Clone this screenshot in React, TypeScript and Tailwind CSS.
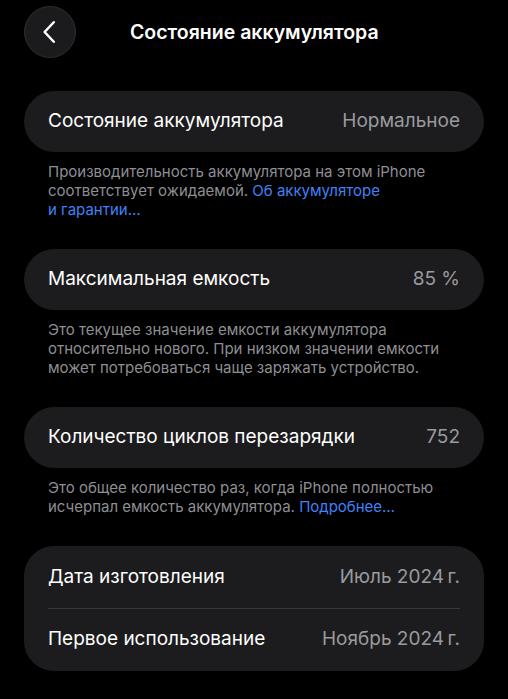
import React from "react";

const font = { fontFamily: "Inter, 'Noto Sans', sans-serif" };

function Row({ label, value }: { label: string; value: string }) {
  return (
    <div className="flex h-[61px] items-center justify-between px-6">
      <span className="text-[19px] text-white">{label}</span>
      <span className="text-[19px] text-[#9a9a9f]">{value}</span>
    </div>
  );
}

export default function App() {
  return (
    <div className="min-h-[699px] w-[508px] bg-black pb-6" style={font}>
      <div className="relative flex h-[63px] items-center">
        <button className="ml-6 flex h-[52px] w-[52px] items-center justify-center rounded-full border border-[#2e2e30] bg-[#1b1b1d]">
          <svg width="26" height="26" viewBox="0 0 24 24" fill="none">
            <path d="M15.5 3 L7 12 L15.5 21" stroke="white" strokeWidth="2.3" strokeLinecap="round" strokeLinejoin="round" />
          </svg>
        </button>
        <div className="ml-[54px] pt-[2px] text-[19.5px] font-semibold text-white">
          Состояние аккумулятора
        </div>
      </div>

      <div className="px-6 pt-[28px]">
        <div className="rounded-full bg-[#1c1c1e]">
          <Row label="Состояние аккумулятора" value="Нормальное" />
        </div>
        <p className="px-6 pt-[10px] text-[15px] leading-[19px] text-[#8e8e93]">
          Производительность аккумулятора на этом iPhone соответствует ожидаемой.{" "}
          <span className="text-[#3f82f7]">Об аккумуляторе<br />и гарантии…</span>
        </p>

        <div className="mt-[30px] rounded-full bg-[#1c1c1e]">
          <Row label="Максимальная емкость" value="85 %" />
        </div>
        <p className="px-6 pt-[10px] text-[15px] leading-[19px] text-[#8e8e93]">
          Это текущее значение емкости аккумулятора относительно нового. При низком значении емкости может потребоваться чаще заряжать устройство.
        </p>

        <div className="mt-[30px] rounded-full bg-[#1c1c1e]">
          <Row label="Количество циклов перезарядки" value="752" />
        </div>
        <p className="px-6 pt-[10px] text-[15px] leading-[19px] text-[#8e8e93]">
          Это общее количество раз, когда iPhone полностью исчерпал емкость аккумулятора.{" "}
          <span className="text-[#3f82f7]">Подробнее…</span>
        </p>

        <div className="mt-[30px] rounded-[30px] bg-[#1c1c1e] py-px">
          <Row label="Дата изготовления" value={"Июль 2024\u202Fг."} />
          <div className="mx-6 h-px bg-[#38383a]" />
          <Row label="Первое использование" value={"Ноябрь 2024\u202Fг."} />
        </div>
      </div>
    </div>
  );
}
